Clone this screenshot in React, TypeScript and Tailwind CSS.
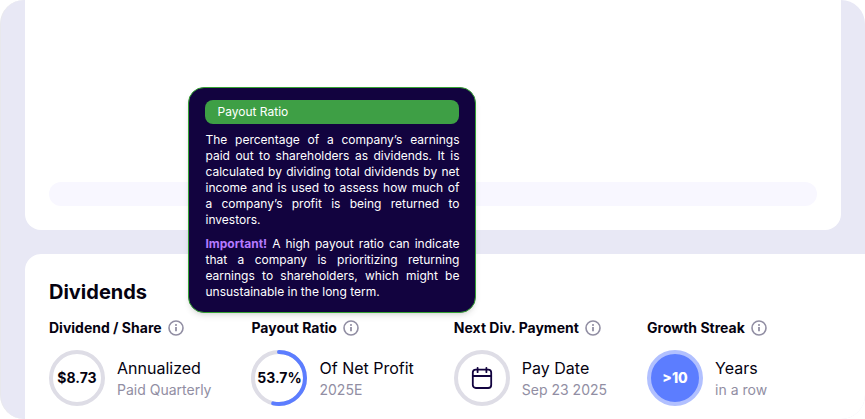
import React, { FC, ReactNode } from 'react';

interface StatProps {
  label: string;
  title: string;
  subtitle: string;
  badge: ReactNode;
  tooltip?: ReactNode;
}

interface RingProps {
  children: ReactNode;
  percent?: number;
}

const InfoIcon = () => (
  <svg className="size-4" viewBox="0 0 16 16" fill="none" aria-hidden="true">
    <circle cx="8" cy="8" r="7" stroke="#918ea3" strokeWidth="1.6" />
    <path d="M8 7.1v4.2" stroke="#918ea3" strokeWidth="1.8" />
    <circle cx="8" cy="5" r="1.05" fill="#918ea3" />
  </svg>
);

const CalendarIcon = () => (
  <svg className="size-6" viewBox="0 0 24 24" fill="none" stroke="#12033f" strokeWidth="1.8" strokeLinecap="round" aria-hidden="true">
    <rect x="2.8" y="3.6" width="18.4" height="18.4" rx="3" />
    <path d="M2.8 10h18.4M7.6 1.8v4.4M16.4 1.8v4.4" />
  </svg>
);

const Ring: FC<RingProps> = ({ children, percent }) => (
  <div className="relative flex size-14 shrink-0 items-center justify-center text-sm font-bold">
    <svg className="absolute inset-0 size-14" viewBox="0 0 56 56" fill="none" aria-hidden="true">
      <circle cx="28" cy="28" r="26" stroke="#dedde6" strokeWidth="4" />
      {percent !== undefined && (
        <circle
          cx="28"
          cy="28"r="26"
          stroke="#5c7dff"
          strokeWidth="4"
          strokeLinecap="round"
          pathLength={100}
          strokeDasharray={`${percent} 100`}
          transform="rotate(-90 28 28)"
        />
      )}
    </svg>
    <span className="relative">{children}</span>
  </div>
);

const PayoutTooltip = () => (
  <div
    id="payout-tooltip"
    role="tooltip"
    className="absolute bottom-full -left-[63px] z-10 mb-[5px] w-72 rounded-2xl border border-[#34a132] bg-[#12033f] px-4 py-3 text-xs leading-4 text-white shadow-md"
  >
    <div className="mb-2 rounded-lg bg-[#3e9f45] px-3 py-1">Payout Ratio</div>
    <p className="mb-2 text-justify">
      The percentage of a company’s earnings paid out to shareholders as dividends. It is calculated by dividing total
      dividends by net income and is used to assess how much of a company’s profit is being returned to investors.
    </p>
    <p className="text-justify">
      <strong className="font-bold text-[#b57aff]">Important!</strong> A high payout ratio can indicate that a company is
      prioritizing returning earnings to shareholders, which might be unsustainable in the long term.
    </p>
  </div>
);

const Stat: FC<StatProps> = ({ label, title, subtitle, badge, tooltip }) => (
  <div className="flex shrink-0 flex-col gap-3">
    <div className="relative flex items-center gap-1.5">
      <h3 className="text-sm leading-5 font-bold whitespace-nowrap">{label}</h3>
      <button type="button" aria-label={`About ${label}`} aria-describedby={tooltip ? 'payout-tooltip' : undefined}>
        <InfoIcon />
      </button>
      {tooltip}
    </div>
    <div className="flex items-center gap-3">
      {badge}
      <div className="whitespace-nowrap">
        <div className="text-base leading-6">{title}</div>
        <div className="text-sm leading-5 text-[#918ea3]">{subtitle}</div>
      </div>
    </div>
  </div>
);

const stats: StatProps[] = [
  {
    label: 'Dividend / Share',
    title: 'Annualized',
    subtitle: 'Paid Quarterly',
    badge: <Ring>$8.73</Ring>,
  },
  {
    label: 'Payout Ratio',
    title: 'Of Net Profit',
    subtitle: '2025E',
    badge: <Ring percent={53.7}>53.7%</Ring>,
    tooltip: <PayoutTooltip />,
  },
  {
    label: 'Next Div. Payment',
    title: 'Pay Date',
    subtitle: 'Sep 23 2025',
    badge: (
      <Ring>
        <CalendarIcon />
      </Ring>
    ),
  },
  {
    label: 'Growth Streak',
    title: 'Years',
    subtitle: 'in a row',
    badge: (
      <div className="flex size-14 shrink-0 items-center justify-center rounded-full border-4 border-[#b1c0ff] bg-[#5c7dff] text-sm font-extrabold text-white">
        &gt;10
      </div>
    ),
  },
];

const App: FC = () => (
  <div className="min-h-screen bg-white font-['Inter',sans-serif] text-[#050210]">
    <main className="flex min-h-screen flex-col gap-6 overflow-hidden rounded-3xl border-l border-[#e8e8ec] bg-[#e8e8f5] pl-6">
      <section className="mr-6 rounded-b-2xl bg-white px-6 pb-6">
        <div className="h-[182px]" />
        <div className="h-6 rounded-full bg-[#f8f7ff]" />
      </section>
      <section className="flex flex-1 flex-col gap-3 rounded-tl-2xl bg-white px-6 pt-6 pb-3">
        <h2 className="text-xl leading-7 font-bold">Dividends</h2>
        <div className="flex gap-10">
          {stats.map((stat) => (
            <Stat key={stat.label} {...stat} />
          ))}
        </div>
      </section>
    </main>
  </div>
);

export default App;
